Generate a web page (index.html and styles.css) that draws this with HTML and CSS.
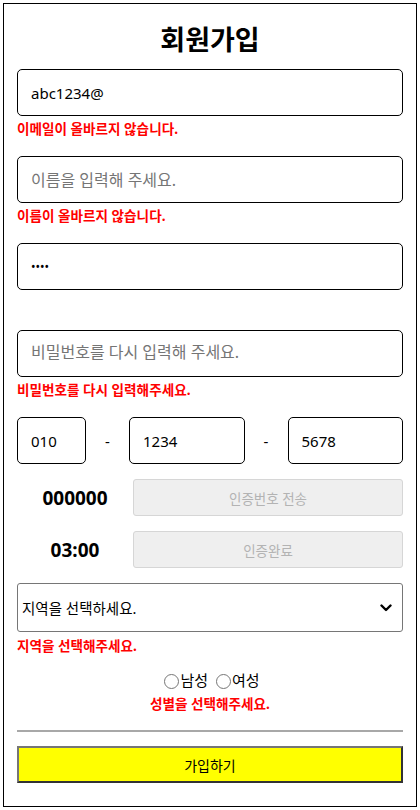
FILE: index.html
```html
<!DOCTYPE html>
<html lang="ko">
<head>
  <meta charset="UTF-8">
  <meta name="viewport" content="width=device-width, initial-scale=1.0">
  <title>회원가입</title>
  <link rel="stylesheet" href="styles.css">
</head>
<body>
  <div class="signup">
    <h1>회원가입</h1>

    <input class="field" type="text" value="abc1234@">
    <p class="error">이메일이 올바르지 않습니다.</p>

    <input class="field" type="text" placeholder="이름을 입력해 주세요.">
    <p class="error">이름이 올바르지 않습니다.</p>

    <input class="field" type="password" value="1234">
    <p class="error"></p>

    <input class="field" type="password" placeholder="비밀번호를 다시 입력해 주세요.">
    <p class="error">비밀번호를 다시 입력해주세요.</p>

    <div class="phone-row">
      <input class="field phone-first" type="text" value="010">
      <span class="dash">-</span>
      <input class="field phone-mid" type="text" value="1234">
      <span class="dash">-</span>
      <input class="field phone-mid" type="text" value="5678">
    </div>

    <div class="auth-row">
      <span class="auth-label">000000</span>
      <button class="auth-btn" disabled>인증번호 전송</button>
    </div>
    <div class="auth-row">
      <span class="auth-label">03:00</span>
      <button class="auth-btn" disabled>인증완료</button>
    </div>

    <div class="region-box">
      <select class="region">
        <option>지역을 선택하세요.</option>
        <option>서울</option>
        <option>경기</option>
        <option>인천</option>
      </select>
      <svg class="region-arrow" width="12" height="8" viewBox="0 0 12 8">
        <path d="M1.5 1.5 L6 6 L10.5 1.5" fill="none" stroke="#000" stroke-width="2.4" stroke-linecap="round" stroke-linejoin="round"/>
      </svg>
    </div>
    <p class="error region-error">지역을 선택해주세요.</p>

    <div class="gender">
      <label><input type="radio" name="gender">남성</label>
      <label><input type="radio" name="gender">여성</label>
    </div>
    <p class="error gender-error">성별을 선택해주세요.</p>

    <hr class="divider">

    <button class="submit-btn">가입하기</button>
  </div>
</body>
</html>
```

FILE: styles.css
```css
body {
  margin: 0;
  font-family: "Noto Sans", "Noto Sans CJK KR", sans-serif;
  color: #000;
  background: #fff;
}

.signup {
  box-sizing: border-box;
  width: 414px;
  margin: 3px;
  border: 1px solid #000;
  padding: 20px 13px 23px 13px;
}

h1 {
  margin: 0 0 13px 0;
  font-size: 27px;
  line-height: 32px;
  font-weight: bold;
  text-align: center;
}

.field {
  display: block;
  box-sizing: border-box;
  width: 100%;
  height: 47px;
  margin: 0;
  padding: 0 13px;
  border: 1px solid #000;
  border-radius: 5px;
  font-family: inherit;
  font-size: 15px;
  color: #000;
  background: #fff;
}
.field::placeholder {
  color: #757575;
  font-size: 16px;
}
.field[type="password"] {
  font-size: 12px;
}

.error {
  box-sizing: border-box;
  height: 40px;
  margin: 0;
  padding-top: 5px;
  font-size: 13.6px;
  line-height: 16px;
  font-weight: bold;
  color: #ff0000;
}

.phone-row {
  display: flex;
  align-items: center;
}
.phone-row .field {
  width: auto;
  min-width: 0;
}
.phone-first {
  flex: 0 0 69px;
}
.phone-mid {
  flex: 1 1 0;
}
.dash {
  flex: 0 0 43px;
  text-align: center;
  font-size: 15px;
}

.auth-row {
  display: flex;
  align-items: center;
  margin-top: 15px;
}
.auth-label {
  flex: 0 0 116px;
  text-align: center;
  font-size: 19px;
  font-weight: bold;
}
.auth-btn {
  flex: 1;
  height: 37px;
  border: 1px solid #d6d6d6;
  border-radius: 3px;
  background: #efefef;
  color: #b3b3b3;
  font-family: inherit;
  font-size: 13.5px;
}

.region-box {
  position: relative;
  margin-top: 15px;
}
.region {
  display: block;
  box-sizing: border-box;
  width: 100%;
  height: 49px;
  margin: 0;
  padding: 0 4px;
  border: 1px solid #767676;
  border-radius: 3px;
  background: #fff;
  color: #000;
  font-family: inherit;
  font-size: 14.5px;
  appearance: none;
  -webkit-appearance: none;
}
.region-arrow {
  position: absolute;
  right: 11px;
  top: 21px;
  pointer-events: none;
}

.region-error {
  height: 38px;
  padding-top: 6px;
}

.gender {
  text-align: center;
  font-size: 15px;
  line-height: 20px;
}
.gender input {
  width: 15px;
  height: 15px;
  margin: 0 1px 0 4px;
  vertical-align: -3px;
}

.gender-error {
  height: auto;
  padding-top: 0;
  margin-top: 6px;
  text-align: center;
}

.divider {
  margin: 18px 0 14px 0;
  height: 0;
  border: none;
  border-top: 2px solid #a8a8a8;
}

.submit-btn {
  display: block;
  box-sizing: border-box;
  width: 100%;
  height: 37px;
  border-width: 2px;
  border-style: solid;
  border-color: #767676 #333 #333 #767676;
  background: #ffff00;
  color: #000;
  font-family: inherit;
  font-size: 14px;
}
```
